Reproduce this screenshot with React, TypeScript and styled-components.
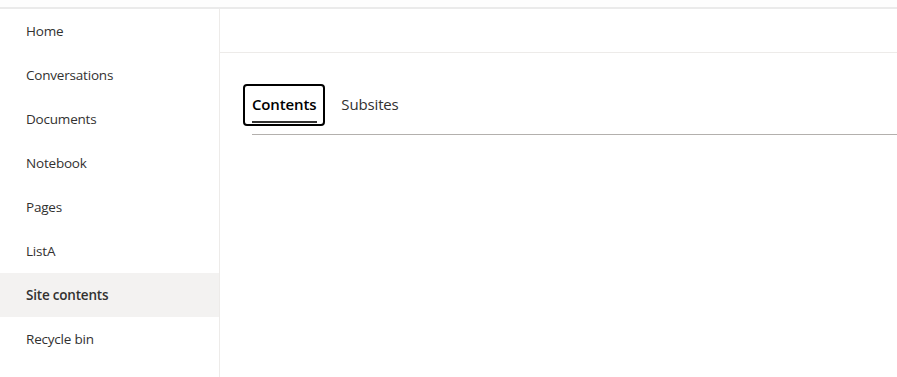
import React, { useState } from "react";
import styled, { createGlobalStyle } from "styled-components";

const Global = createGlobalStyle`
  html, body { margin: 0; padding: 0; background: #ffffff; }
  body { font-family: "Open Sans", "Noto Sans", Arial, sans-serif; color: #323130; }
  * { box-sizing: border-box; }
`;

const Page = styled.div`
  width: 897px;
  height: 377px;
  overflow: hidden;
  display: flex;
  flex-direction: column;
  background: #ffffff;
`;

const TopStrip = styled.div`
  height: 9px;
  flex: none;
  background: #fdfdfd;
  border-bottom: 2px solid #eaeaea;
`;

const Body = styled.div`
  flex: 1;
  display: flex;
  min-height: 0;
`;

const Nav = styled.nav`
  width: 220px;
  flex: none;
  border-right: 1px solid #edebe9;
  display: flex;
  flex-direction: column;
`;

const NavItem = styled.a<{ $active?: boolean }>`
  height: 44px;
  display: flex;
  align-items: center;
  padding-left: 26px;
  font-size: 13.5px;
  letter-spacing: -0.2px;
  color: #323130;
  text-decoration: none;
  font-weight: ${(p) => (p.$active ? 600 : 400)};
  background: ${(p) => (p.$active ? "#f3f2f1" : "transparent")};
  cursor: pointer;
`;

const Main = styled.main`
  flex: 1;
  display: flex;
  flex-direction: column;
  min-width: 0;
`;

const Header = styled.div`
  height: 44px;
  flex: none;
  border-bottom: 1px solid #edebe9;
`;

const TabArea = styled.div`
  padding: 31px 0 0 23px;
`;

const TabList = styled.div`
  display: flex;
  align-items: center;
  gap: 7px;
  height: 42px;
`;

const Tab = styled.button<{ $selected?: boolean }>`
  position: relative;
  height: 42px;
  padding: 0 7px 2px;
  border: 2px solid ${(p) => (p.$selected ? "#000000" : "transparent")};
  border-radius: 4px;
  background: transparent;
  font-family: "Open Sans", "Noto Sans", Arial, sans-serif;
  font-size: 15px;
  letter-spacing: -0.15px;
  font-weight: ${(p) => (p.$selected ? 600 : 400)};
  color: ${(p) => (p.$selected ? "#000000" : "#323130")};
  cursor: pointer;
  &::after {
    content: "";
    display: ${(p) => (p.$selected ? "block" : "none")};
    position: absolute;
    left: 7px;
    right: 6px;
    bottom: 1px;
    height: 2px;
    background: #323130;
  }
`;

const TabRule = styled.div`
  margin: 8px 0 0 9px;
  height: 1px;
  background: #b3b0ad;
`;

const items = [
  "Home",
  "Conversations",
  "Documents",
  "Notebook",
  "Pages",
  "ListA",
  "Site contents",
  "Recycle bin",
];

export default function App() {
  const [tab, setTab] = useState("Contents");
  return (
    <Page>
      <Global />
      <TopStrip />
      <Body>
        <Nav>
          {items.map((it) => (
            <NavItem key={it} $active={it === "Site contents"}>
              {it}
            </NavItem>
          ))}
        </Nav>
        <Main>
          <Header />
          <TabArea>
            <TabList>
              {["Contents", "Subsites"].map((t) => (
                <Tab key={t} $selected={tab === t} onClick={() => setTab(t)}>
                  {t}
                </Tab>
              ))}
            </TabList>
            <TabRule />
          </TabArea>
        </Main>
      </Body>
    </Page>
  );
}
